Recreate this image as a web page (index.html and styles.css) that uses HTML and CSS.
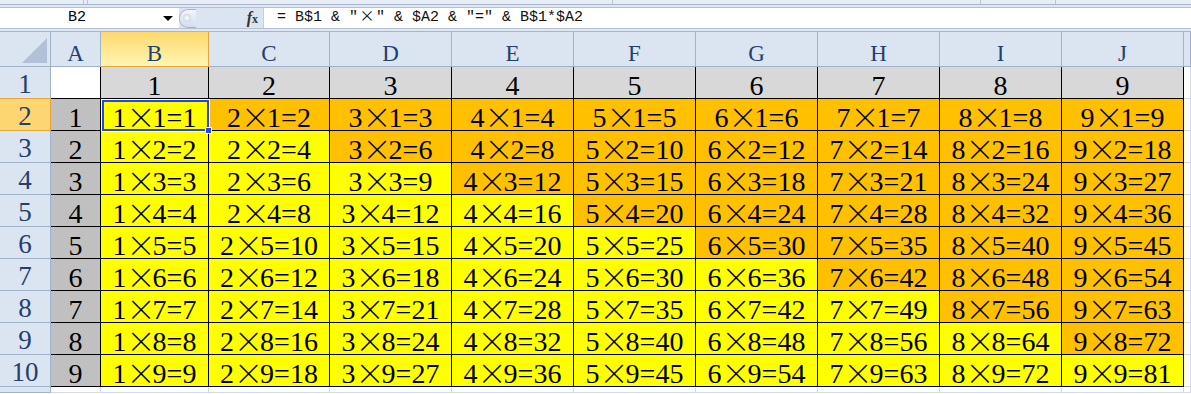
FILE: index.html
```html
<!DOCTYPE html>
<html lang="zh">
<head>
  <meta charset="UTF-8" />
  <title>九九乘法表</title>
  <link rel="stylesheet" href="styles.css">
</head>
<body>
  <!-- ribbon edge -->
  <div class="strip">
    <div style="width:83px"></div>
    <div style="width:3px"></div>
    <div style="width:524px"></div>
    <div style="width:367px"></div>
    <div style="width:74px"></div>
  </div>
  <div class="band"></div>

  <!-- formula bar -->
  <div class="fbar">
    <div class="namebox">
      <span class="ref">B2</span>
      <span class="drop"></span>
    </div>
    <div class="tools">
      <span class="grip"><span class="dot"></span></span>
      <span class="fx"><i>f</i><small>x</small></span>
    </div>
    <div class="formula">= B$1 &amp; ″<span class="fw">×</span>″ &amp; $A2 &amp; ″=″ &amp; B$1*$A2</div>
  </div>
  <div class="band2"></div>

  <!-- sheet -->
  <div class="sheet">
    <div class="hd corner"><svg width="50" height="34"><polygon points="22,31 47,31 47,6" fill="#b2c1d7"/></svg></div>
    <div class="hd">A</div><div class="hd sel">B</div><div class="hd">C</div><div class="hd">D</div><div class="hd">E</div>
    <div class="hd">F</div><div class="hd">G</div><div class="hd">H</div><div class="hd">I</div><div class="hd">J</div><div class="hd"></div>

    <div class="rh">1</div>
    <div class="c blank"></div>
    <div class="c top">1</div><div class="c top">2</div><div class="c top">3</div><div class="c top">4</div><div class="c top">5</div>
    <div class="c top">6</div><div class="c top">7</div><div class="c top">8</div><div class="c top">9</div><div class="e"></div>

    <div class="rh sel">2</div>
    <div class="c side">1</div>
    <div class="c y cur">1<span class="x">×</span>1=1<span class="cursor"><span class="handle"></span></span></div>
    <div class="c o">2<span class="x">×</span>1=2</div><div class="c o">3<span class="x">×</span>1=3</div><div class="c o">4<span class="x">×</span>1=4</div>
    <div class="c o">5<span class="x">×</span>1=5</div><div class="c o">6<span class="x">×</span>1=6</div><div class="c o">7<span class="x">×</span>1=7</div>
    <div class="c o">8<span class="x">×</span>1=8</div><div class="c o">9<span class="x">×</span>1=9</div><div class="e"></div>

    <div class="rh">3</div>
    <div class="c side">2</div>
    <div class="c y">1<span class="x">×</span>2=2</div><div class="c y">2<span class="x">×</span>2=4</div><div class="c o">3<span class="x">×</span>2=6</div>
    <div class="c o">4<span class="x">×</span>2=8</div><div class="c o">5<span class="x">×</span>2=10</div><div class="c o">6<span class="x">×</span>2=12</div>
    <div class="c o">7<span class="x">×</span>2=14</div><div class="c o">8<span class="x">×</span>2=16</div><div class="c o">9<span class="x">×</span>2=18</div><div class="e"></div>

    <div class="rh">4</div>
    <div class="c side">3</div>
    <div class="c y">1<span class="x">×</span>3=3</div><div class="c y">2<span class="x">×</span>3=6</div><div class="c y">3<span class="x">×</span>3=9</div>
    <div class="c o">4<span class="x">×</span>3=12</div><div class="c o">5<span class="x">×</span>3=15</div><div class="c o">6<span class="x">×</span>3=18</div>
    <div class="c o">7<span class="x">×</span>3=21</div><div class="c o">8<span class="x">×</span>3=24</div><div class="c o">9<span class="x">×</span>3=27</div><div class="e"></div>

    <div class="rh">5</div>
    <div class="c side">4</div>
    <div class="c y">1<span class="x">×</span>4=4</div><div class="c y">2<span class="x">×</span>4=8</div><div class="c y">3<span class="x">×</span>4=12</div>
    <div class="c y">4<span class="x">×</span>4=16</div><div class="c o">5<span class="x">×</span>4=20</div><div class="c o">6<span class="x">×</span>4=24</div>
    <div class="c o">7<span class="x">×</span>4=28</div><div class="c o">8<span class="x">×</span>4=32</div><div class="c o">9<span class="x">×</span>4=36</div><div class="e"></div>

    <div class="rh">6</div>
    <div class="c side">5</div>
    <div class="c y">1<span class="x">×</span>5=5</div><div class="c y">2<span class="x">×</span>5=10</div><div class="c y">3<span class="x">×</span>5=15</div>
    <div class="c y">4<span class="x">×</span>5=20</div><div class="c y">5<span class="x">×</span>5=25</div><div class="c o">6<span class="x">×</span>5=30</div>
    <div class="c o">7<span class="x">×</span>5=35</div><div class="c o">8<span class="x">×</span>5=40</div><div class="c o">9<span class="x">×</span>5=45</div><div class="e"></div>

    <div class="rh">7</div>
    <div class="c side">6</div>
    <div class="c y">1<span class="x">×</span>6=6</div><div class="c y">2<span class="x">×</span>6=12</div><div class="c y">3<span class="x">×</span>6=18</div>
    <div class="c y">4<span class="x">×</span>6=24</div><div class="c y">5<span class="x">×</span>6=30</div><div class="c y">6<span class="x">×</span>6=36</div>
    <div class="c o">7<span class="x">×</span>6=42</div><div class="c o">8<span class="x">×</span>6=48</div><div class="c o">9<span class="x">×</span>6=54</div><div class="e"></div>

    <div class="rh">8</div>
    <div class="c side">7</div>
    <div class="c y">1<span class="x">×</span>7=7</div><div class="c y">2<span class="x">×</span>7=14</div><div class="c y">3<span class="x">×</span>7=21</div>
    <div class="c y">4<span class="x">×</span>7=28</div><div class="c y">5<span class="x">×</span>7=35</div><div class="c y">6<span class="x">×</span>7=42</div>
    <div class="c y">7<span class="x">×</span>7=49</div><div class="c o">8<span class="x">×</span>7=56</div><div class="c o">9<span class="x">×</span>7=63</div><div class="e"></div>

    <div class="rh">9</div>
    <div class="c side">8</div>
    <div class="c y">1<span class="x">×</span>8=8</div><div class="c y">2<span class="x">×</span>8=16</div><div class="c y">3<span class="x">×</span>8=24</div>
    <div class="c y">4<span class="x">×</span>8=32</div><div class="c y">5<span class="x">×</span>8=40</div><div class="c y">6<span class="x">×</span>8=48</div>
    <div class="c y">7<span class="x">×</span>8=56</div><div class="c y">8<span class="x">×</span>8=64</div><div class="c o">9<span class="x">×</span>8=72</div><div class="e"></div>

    <div class="rh">10</div>
    <div class="c side">9</div>
    <div class="c y">1<span class="x">×</span>9=9</div><div class="c y">2<span class="x">×</span>9=18</div><div class="c y">3<span class="x">×</span>9=27</div>
    <div class="c y">4<span class="x">×</span>9=36</div><div class="c y">5<span class="x">×</span>9=45</div><div class="c y">6<span class="x">×</span>9=54</div>
    <div class="c y">7<span class="x">×</span>9=63</div><div class="c y">8<span class="x">×</span>9=72</div><div class="c y">9<span class="x">×</span>9=81</div><div class="e"></div>

    <div class="rh"></div>
    <div class="e"></div><div class="e"></div><div class="e"></div><div class="e"></div><div class="e"></div><div class="e"></div>
    <div class="e"></div><div class="e"></div><div class="e"></div><div class="e"></div><div class="e"></div>
  </div>
</body>
</html>
```
FILE: styles.css
```css
body {
  margin: 0;
  width: 1191px;
  height: 394px;
  overflow: hidden;
  background: #fff;
  font-family: "Liberation Serif", serif;
}

/* ribbon edge + formula bar */
.strip { display: flex; height: 4px; background: #e7edf6; border-bottom: 1px solid #a8b7cc; }
.strip div { border-right: 1px solid #b7c4d6; }
.band { height: 2px; background: #dde6f1; }
.band2 { height: 2px; background: #e1e8f2; border-bottom: 1px solid #a8b7cc; }

.fbar {
  display: flex;
  height: 20px;
  border-top: 1px solid #b3c1d4;
  border-bottom: 1px solid #b3c1d4;
  background: #dbe5f1;
  font: 15px "Liberation Mono", monospace;
  line-height: 20px;
}
.namebox { width: 179px; background: #fff; display: flex; align-items: center; }
.namebox .ref { width: 154px; text-align: center; }
.namebox .drop {
  margin-left: 9px;
  border-left: 5px solid transparent;
  border-right: 5px solid transparent;
  border-top: 5px solid #000;
}
.tools { width: 84px; display: flex; align-items: center; }
.grip {
  display: flex;
  align-items: center;
  width: 16px;
  height: 17px;
  border: 1px solid #a7b4c7;
  border-right: 0;
  border-radius: 9px 0 0 9px;
  background: linear-gradient(#f1f5fa, #d3deeb);
}
.grip .dot {
  width: 8px; height: 8px;
  margin-left: 3px;
  border-radius: 50%;
  background: radial-gradient(#ffffff, #b9c6d8);
}
.fx {
  margin-left: auto;
  margin-right: 5px;
  font-family: "Liberation Serif", serif;
  font-weight: bold;
  color: #333;
  font-size: 16px;
}
.fx small { font-size: 12px; }
.formula {
  flex: 1;
  background: #fff;
  border-left: 1px solid #c4cfdd;
  padding-left: 13px;
  white-space: pre;
  color: #111;
}
.fw {
  display: inline-block;
  width: 18px;
  line-height: 0;
  text-align: center;
  font-family: "Noto Sans CJK JP", sans-serif;
  font-feature-settings: "fwid" 1;
}

/* sheet grid */
.sheet {
  display: grid;
  grid-template-columns: 51px 50px 108px 121px 122px 122px 122px 122px 122px 122px 122px 1fr;
  grid-template-rows: 35px repeat(10, 32px) 1fr;
  height: 361px;
}
.hd, .rh {
  background: #dbe5f1;
  border-right: 1px solid #9fb3cc;
  border-bottom: 1px solid #9fb3cc;
  color: #233f6d;
  text-align: center;
}
.hd { font-size: 23px; line-height: 24px; padding-top: 10px; }
.hd.corner { padding: 0; }
.hd.corner svg { display: block; }
.rh { font-size: 27px; line-height: 25px; padding-top: 5px; }
.hd.sel {
  background: linear-gradient(#fdd96f, #fff5b0);
  border-right-color: #e3a53c;
  border-bottom-color: #e3a53c;
}
.rh.sel {
  background: #fdd672;
  border-top: 1px solid #e3a53c;
  border-bottom-color: #e3a53c;
  border-right-color: #e3a53c;
  margin-top: -1px;
}

.c {
  border-right: 1px solid #000;
  border-bottom: 1px solid #000;
  font-size: 28px;
  line-height: 25px;
  padding-top: 6px;
  text-align: center;
  white-space: nowrap;
  color: #000;
}
.blank { background: #fff; }
.top { background: #d8d8d8; }
.side { background: #c0c0c0; }
.y { background: #ffff00; }
.o { background: #ffc000; }
.e { border-right: 1px solid #d5dbe5; border-bottom: 1px solid #d5dbe5; background: #fff; }

.x {
  display: inline-block;
  width: 26px;
  line-height: 0;
  vertical-align: -2px;
  font-family: "Noto Sans CJK JP", sans-serif;
  font-feature-settings: "fwid" 1;
  font-size: 29px;
  font-weight: 300;
}

/* active cell */
.cur { position: relative; }
.cursor {
  position: absolute;
  top: 1px; left: 1px; right: -1px; bottom: -1px;
  border: 2px solid #2444f0;
  outline: 1px solid #fff;
}
.handle {
  position: absolute;
  right: -5px; bottom: -5px;
  width: 5px; height: 5px;
  background: #2444f0;
  border: 1px solid #fff;
}
```
